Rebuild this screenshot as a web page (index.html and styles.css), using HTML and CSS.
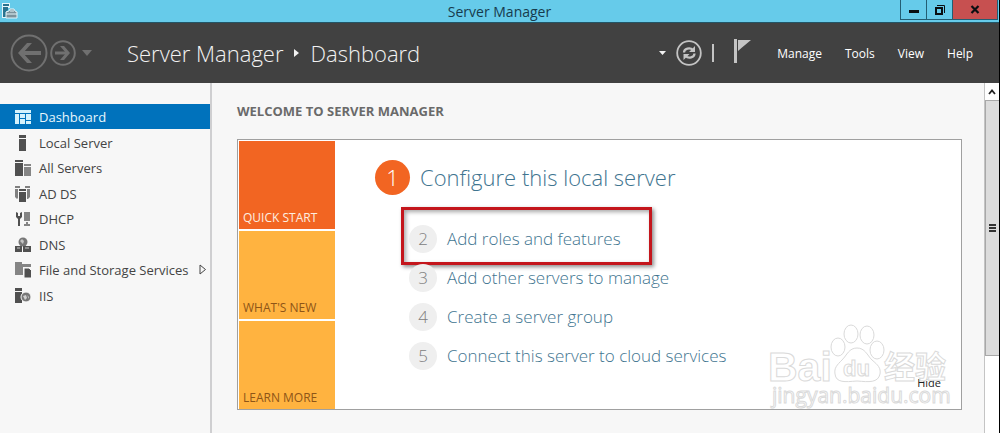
FILE: index.html
```
<!DOCTYPE html>
<html lang="en">
<head>
    <meta charset="UTF-8">
    <meta name="viewport" content="width=device-width, initial-scale=1.0">
    <title>Server Manager</title>
    <link rel="stylesheet" href="styles.css">
</head>
<body>
    <div class="window">
        <div class="titlebar">
            <svg class="app-icon" width="16" height="16" viewBox="0 0 16 16">
                <path d="M0 0h8v5h-3v10h-5z" fill="#e4f5fa"/>
                <path d="M1 1h6v2h-6zM1 4h5v3l-2 2v5h-3z" fill="#28738f"/>
                <path d="M4 9l3-1 1-2h4l1 2 2 1v6h-11z" fill="#7d929c" stroke="#e4f5fa"/>
                <path d="M4 11h11M8 8h4" stroke="#e4f5fa"/>
            </svg>
            <span class="window-title">Server Manager</span>
            <div class="window-buttons">
                <button class="win-btn" aria-label="Minimize">
                    <svg width="12" height="12" viewBox="0 0 12 12"><path d="M1 6h10v3h-10z" fill="#0a0f12"/></svg>
                </button>
                <button class="win-btn" aria-label="Restore">
                    <svg width="12" height="12" viewBox="0 0 12 12" fill="none" stroke="#0a0f12"><path d="M2 4h6v6h-6z" stroke-width="2"/><path d="M3 1.5h7.500v7.500"/></svg>
                </button>
                <button class="win-btn win-close" aria-label="Close">
                    <svg width="12" height="12" viewBox="0 0 12 12"><path d="M2.500 2l7 7M9.500 2l-7 7" stroke="#0a0f12" stroke-width="2.200"/></svg>
                </button>
            </div>
        </div>

        <header class="header">
            <div class="nav-buttons">
                <button class="icon-btn" aria-label="Back">
                    <svg width="38" height="38" viewBox="0 0 38 38" fill="none" stroke="#707070">
                        <circle cx="19" cy="19" r="17.500" stroke-width="2"/>
                        <path d="M31 19h-20" stroke-width="4"/>
                        <path d="M8 19l9-10h5l-9 10l9 10h-5z" fill="#707070" stroke="none"/>
                    </svg>
                </button>
                <button class="icon-btn" aria-label="Forward">
                    <svg width="26" height="26" viewBox="0 0 26 26" fill="none" stroke="#707070">
                        <circle cx="13" cy="13" r="11.800" stroke-width="2"/>
                        <path d="M5 13h12" stroke-width="3"/>
                        <path d="M20 13l-6-7h-4l6 7l-6 7h4z" fill="#707070" stroke="none"/>
                    </svg>
                </button>
                <button class="icon-btn history" aria-label="History">
                    <svg width="10" height="6" viewBox="0 0 10 6"><path d="M0 0h10l-5 6z" fill="#707070"/></svg>
                </button>
            </div>
            <h1 class="breadcrumb">
                <span>Server Manager</span>
                <svg width="5" height="8" viewBox="0 0 5 8"><path d="M0 0l5 4l-5 4z" fill="#f2f2f2"/></svg>
                <span>Dashboard</span>
            </h1>
            <div class="tools">
                <button class="icon-btn" aria-label="Refresh options">
                    <svg width="7" height="4" viewBox="0 0 7 4"><path d="M0 0h7l-3.500 4z" fill="#f2f2f2"/></svg>
                </button>
                <button class="icon-btn refresh" aria-label="Refresh">
                    <svg width="26" height="26" viewBox="0 0 26 26" fill="none" stroke="#c4c4c4">
                        <circle cx="13" cy="13" r="11.800" stroke-width="1.800"/>
                        <path d="M8 12.500c0-4 6-5.500 9-2.500M18.500 13.500c0 4-6 5.500-9 2.500" stroke-width="2.200"/>
                        <path d="M19 6v6h-6zM7.500 20v-6h6z" fill="#c4c4c4" stroke="none"/>
                    </svg>
                </button>
                <span class="divider"></span>
                <button class="icon-btn flag" aria-label="Notifications">
                    <svg width="17" height="24" viewBox="0 0 17 24" fill="#c4c4c4"><path d="M0 0h3v24h-3zM4 1h13l-9 7.500l-4 3.500z"/></svg>
                </button>
                <nav class="menu">
                    <a href="#">Manage</a>
                    <a href="#">Tools</a>
                    <a href="#">View</a>
                    <a href="#">Help</a>
                </nav>
            </div>
        </header>

        <div class="content">
            <nav class="sidebar">
                <a class="side-item active" href="#">
                    <svg width="16" height="16" viewBox="0 0 16 16" fill="#d5f2fc"><path d="M0 1h16v3h-16zM0 5h4v10h-4zM5 5h5v4h-5zM5 10h5v5h-5zM11 5h5v6h-5zM11 12h5v3h-5z"/></svg>
                    <span>Dashboard</span>
                </a>
                <a class="side-item" href="#">
                    <svg width="16" height="16" viewBox="0 0 16 16"><path d="M4 0h7v3h-7zM4 4h7v12h-7z"/></svg>
                    <span>Local Server</span>
                </a>
                <a class="side-item" href="#">
                    <svg width="16" height="16" viewBox="0 0 16 16"><path d="M0 0h8v2h-8zM0 3h8v13h-8z"/><path d="M9 4h7v2h-7zM9 7h7v9h-7z" fill="#858585"/></svg>
                    <span>All Servers</span>
                </a>
                <a class="side-item" href="#">
                    <svg width="16" height="16" viewBox="0 0 16 16"><path d="M0 0h5v2h-5zM10 0h5v2h-5zM0 3h3v9l-1 1l-2-2zM12 3h3v8l-2 2h-1z" fill="#808080"/><path d="M4 3h7v2h-7zM4 6h7v10h-7z"/></svg>
                    <span>AD DS</span>
                </a>
                <a class="side-item" href="#">
                    <svg width="16" height="16" viewBox="0 0 16 16"><path d="M1 1l2 1v3h2v-3l2-1v5l-2 2v7h-2v-7l-2-2z"/><path d="M9 1h6v9h-6zM11 11h2v2h2v2h-6v-2h2z" fill="#858585"/></svg>
                    <span>DHCP</span>
                </a>
                <a class="side-item" href="#">
                    <svg width="16" height="16" viewBox="0 0 16 16"><circle cx="8" cy="5" r="4.500" fill="#777"/><path d="M5 4l2-2l2 2l-1 3zM9 5l3-1" fill="#c4c4c4"/><path d="M0 9h7v6h-7zM8 9h8v6h-8z"/><path d="M2 11h3M10 11h4" stroke="#ccc"/></svg>
                    <span>DNS</span>
                </a>
                <a class="side-item" href="#">
                    <svg width="16" height="16" viewBox="0 0 16 16"><path d="M0 0h7v2h9v3h-16zM0 5h8v8h-8z" fill="#858585"/><path d="M9 6h5l3 3v7h-8z" stroke="#f7f7f7"/></svg>
                    <span>File and Storage Services</span>
                    <svg class="expand" width="8" height="11" viewBox="0 0 8 11"><path d="M1 1l5.500 4.500l-5.500 4.500z" fill="none" stroke="#444"/></svg>
                </a>
                <a class="side-item" href="#">
                    <svg width="16" height="16" viewBox="0 0 16 16"><path d="M0 0h7v3h-7zM0 4h7v11h-7z"/><circle cx="11" cy="9" r="5" fill="#777" stroke="#f7f7f7"/><path d="M8 8l3-1l1 3l-2 2zM12 7l2 2v2z" fill="#d0d0d0"/></svg>
                    <span>IIS</span>
                </a>
            </nav>

            <main class="main">
                <h2 class="welcome">WELCOME TO SERVER MANAGER</h2>
                <section class="panel">
                    <div class="tiles">
                        <button class="tile tile-active">QUICK START</button>
                        <button class="tile">WHAT'S NEW</button>
                        <button class="tile">LEARN MORE</button>
                    </div>
                    <div class="steps">
                        <a class="step step-main" href="#"><span class="num">1</span>Configure this local server</a>
                        <a class="step marked" href="#"><span class="num">2</span>Add roles and features</a>
                        <a class="step" href="#"><span class="num">3</span>Add other servers to manage</a>
                        <a class="step" href="#"><span class="num">4</span>Create a server group</a>
                        <a class="step" href="#"><span class="num">5</span>Connect this server to cloud services</a>
                    </div>
                    <button class="hide-btn">Hide</button>
                    <svg class="watermark" width="184" height="92" viewBox="0 0 184 92">
                        <g class="mark">
                            <text class="mark-logo" x="1" y="59">Bai</text>
                            <ellipse cx="71" cy="25" rx="7" ry="9"/>
                            <ellipse cx="84" cy="12" rx="7" ry="9"/>
                            <ellipse cx="100" cy="13" rx="7" ry="9"/>
                            <ellipse cx="110" cy="28" rx="7" ry="9"/>
                            <path d="M90 26c8 0 10 7 15 12c6 5 9 8 8 14c-2 9-11 8-23 7c-12 1-21 2-22-7c-1-6 2-9 7-14c5-5 7-12 15-12z"/>
                            <text class="mark-du" x="76" y="54">du</text>
                            <text class="mark-cjk" x="117" y="56">经验</text>
                            <text class="mark-url" x="5" y="81">jingyan.baidu.com</text>
                        </g>
                    </svg>
                </section>
            </main>

            <div class="scrollbar">
                <button class="scroll-up" aria-label="Scroll up">
                    <svg width="8" height="6" viewBox="0 0 8 6"><path d="M1 5l3-3.500l3 3.500" fill="none" stroke="#222" stroke-width="1.800"/></svg>
                </button>
                <div class="thumb"><span class="grip"></span></div>
            </div>
        </div>
    </div>
</body>
</html>
```
FILE: styles.css
```
:root {
    --sky: #66cbea;
    --header: #414141;
    --page: #f7f7f7;
    --blue: #0072bc;
    --orange: #f26522;
    --amber: #ffb340;
    --link: #3f7590;
    --red: #c4161c;
}

* {
    margin: 0;
    padding: 0;
    box-sizing: border-box;
}

body {
    font-family: "Open Sans", "Noto Sans", sans-serif;
    background: var(--page);
    color: #444;
}

a {
    color: inherit;
    text-decoration: none;
}

button {
    font: inherit;
    color: inherit;
    background: none;
    border: none;
}

svg {
    display: block;
    flex: none;
}

.window {
    min-height: 100vh;
    display: flex;
    flex-direction: column;
    border-right: 1px solid #000;
}

/* Title bar */
.titlebar {
    display: grid;
    grid-template-columns: 1fr auto 1fr;
    height: 23px;
    background: var(--sky);
    border-bottom: 1px solid #225566;
}

.app-icon {
    margin: 3px 0 0 2px;
}

.window-title {
    font-size: 14px;
    line-height: 23px;
    color: #173b4d;
}

.window-buttons {
    justify-self: end;
    display: flex;
    height: 20px;
    margin-right: 1px;
}

.win-btn {
    width: 27px;
    display: flex;
    align-items: center;
    justify-content: center;
    border: 1px solid #235e73;
    border-top: none;
    margin-left: -1px;
}

.win-close {
    width: 46px;
    background: #c75050;
}

/* Header */
.header {
    display: flex;
    align-items: center;
    height: 60px;
    padding: 0 26px 0 10px;
    background: var(--header);
    color: #f2f2f2;
}

.nav-buttons {
    display: flex;
    align-items: center;
    gap: 2px;
    width: 117px;
}

.history {
    margin-left: 4px;
}

.breadcrumb {
    display: flex;
    align-items: center;
    gap: 11px;
    font-size: 22px;
    font-weight: 300;
    line-height: 32px;
}

.tools {
    display: flex;
    align-items: center;
    margin-left: auto;
}

.refresh {
    margin: 0 10px;
}

.divider {
    width: 2px;
    height: 18px;
    background: #c4c4c4;
}

.flag {
    margin: 0 26px 4px 20px;
}

.menu {
    display: flex;
    gap: 23px;
    font-size: 12px;
    color: #fff;
}

/* Content */
.content {
    flex: 1;
    display: flex;
}

.sidebar {
    width: 212px;
    padding-top: 21px;
    border-right: 2px solid #cfcfd1;
}

.side-item {
    display: flex;
    align-items: center;
    gap: 8px;
    height: 25px;
    margin-bottom: 1px;
    padding-left: 15px;
    font-size: 13px;
    fill: #505050;
}

.side-item:nth-child(even) {
    margin-bottom: 0;
}

.active {
    background: var(--blue);
    color: #e8f7fd;
}

.expand {
    margin-left: 2px;
}

.main {
    flex: 1;
    padding: 18px 22px 20px 25px;
}

.welcome {
    font-size: 13px;
    line-height: 20px;
    font-weight: 700;
    color: #6a6a6a;
}

.panel {
    position: relative;
    display: flex;
    margin-top: 18px;
    padding: 1px 1px 0;
    background: #fff;
    border: 1px solid #a0a0a0;
}

.tiles {
    display: flex;
    flex-direction: column;
    gap: 2px;
    width: 96px;
}

.tile {
    display: flex;
    align-items: flex-end;
    height: 88px;
    padding: 0 4px 3px;
    background: var(--amber);
    color: #8e5517;
    font-size: 12px;
    white-space: nowrap;
}

.tile-active {
    background: var(--orange);
    color: #fdeee0;
}

.steps {
    display: flex;
    flex-direction: column;
    align-items: flex-start;
    padding: 18px 0 0 66px;
}

.step {
    display: flex;
    align-items: center;
    gap: 10px;
    height: 39px;
    padding: 0 32px 0 8px;
    font-size: 17px;
    font-weight: 300;
    color: var(--link);
}

.num {
    display: flex;
    align-items: center;
    justify-content: center;
    width: 28px;
    height: 28px;
    border-radius: 50%;
    background: #efefef;
    color: #808080;
}

.step-main {
    height: 36px;
    margin: 0 0 12px -26px;
    padding-left: 0;
    font-size: 22px;
}

.step-main .num {
    width: 35px;
    height: 35px;
    background: var(--orange);
    color: #fff;
}

.marked {
    height: 58px;
    margin-bottom: -7px;
    padding: 5px 28px 0 5px;
    border: 3px solid var(--red);
    box-shadow: 2px 2px 4px rgba(0, 0, 0, 0.45), inset 2px 2px 4px rgba(0, 0, 0, 0.35);
}

.hide-btn {
    position: absolute;
    right: 20px;
    bottom: 18px;
    font-size: 11px;
    line-height: 16px;
    color: #222;
}

/* Watermark over the panel corner */
.watermark {
    position: absolute;
    right: 10px;
    bottom: -5px;
}

.mark {
    fill: #fff;
    stroke: #dadada;
    stroke-width: 1px;
}

.mark-logo,
.mark-du {
    font-family: "Liberation Sans", sans-serif;
    font-weight: 700;
}

.mark-logo {
    font-size: 41px;
}

.mark-du {
    font-size: 22px;
}

.mark-cjk {
    font-family: "Noto Sans CJK SC", sans-serif;
    font-size: 31px;
    font-weight: 700;
}

.mark-url {
    font-size: 21px;
    font-weight: 400;
}

/* Scrollbar */
.scrollbar {
    display: flex;
    flex-direction: column;
    width: 15px;
    background: #fff;
    border-left: 1px solid #c4c4c4;
}

.scroll-up {
    display: flex;
    align-items: center;
    justify-content: center;
    height: 17px;
}

.thumb {
    display: flex;
    align-items: center;
    justify-content: center;
    height: 73%;
    background: #dcdcdc;
    border: 1px solid #a8a8a8;
    border-right: none;
}

.grip {
    width: 7px;
    height: 8px;
    background: repeating-linear-gradient(#333 0 2px, #dcdcdc 2px 3px);
}
```
